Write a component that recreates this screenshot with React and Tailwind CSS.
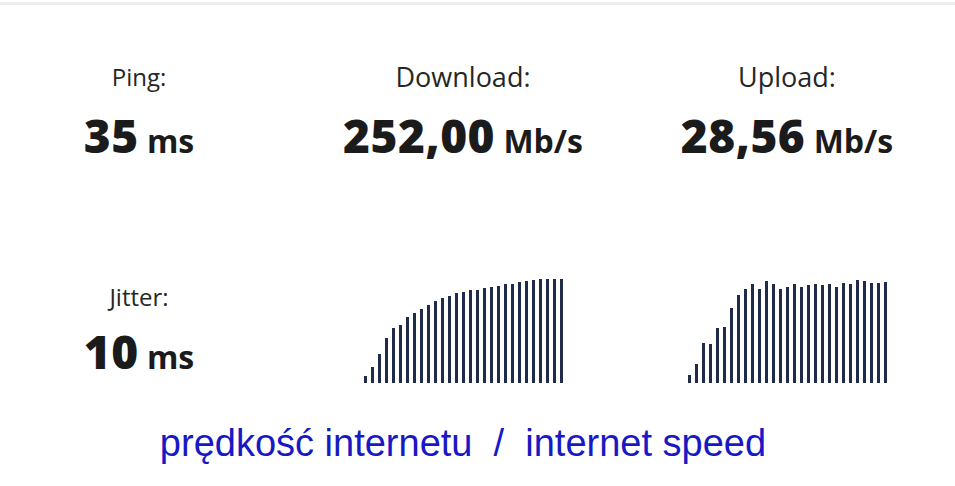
import React from "react";

const downloadBars = [
  7, 16, 29, 45, 55, 58, 66, 70, 74, 78, 82, 85, 87, 90, 91, 93, 93, 95, 96,
  97, 99, 99, 101, 102, 103, 104, 104, 104, 104,
];

const uploadBars = [
  8, 19, 40, 39, 55, 56, 75, 88, 94, 99, 94, 102, 99, 94, 96, 99, 96, 98, 99,
  98, 99, 96, 100, 99, 103, 102, 100, 100, 101,
];

function Label({ text, big }) {
  return (
    <div
      className={`leading-[32px] text-[#262626] ${
        big ? "text-[27px]" : "text-[24px]"
      }`}
    >
      {text}
    </div>
  );
}

function Value({ num, unit, className = "mt-[18px]" }) {
  return (
    <div
      className={`${className} h-[48px] leading-[48px] font-extrabold text-[46px] tracking-[0.5px] text-[#1b1b1b] whitespace-nowrap`}
    >
      {num}
      <span className="text-[32px] tracking-normal font-bold"> {unit}</span>
    </div>
  );
}

function Bars({ data }) {
  return (
    <div className="flex items-end justify-center gap-[4px] h-[104px]">
      {data.map((h, i) => (
        <div
          key={i}
          className="w-[3px] bg-[#1f2b48]"
          style={{ height: `${h}px` }}
        />
      ))}
    </div>
  );
}

export default function App() {
  return (
    <div className="w-[955px] h-[486px] bg-white overflow-hidden font-['Open_Sans',sans-serif]">
      <div className="mt-[2px] h-[3px] bg-[#ededed]" />

      {/* top row: ping / download / upload */}
      <div className="grid grid-cols-[278px_370px_278px] w-[926px] mt-[56px]">
        <div className="flex flex-col items-center">
          <Label text="Ping:" />
          <Value num="35" unit="ms" />
        </div>
        <div className="flex flex-col items-center">
          <Label text="Download:" big />
          <Value num="252,00" unit="Mb/s" />
        </div>
        <div className="flex flex-col items-center">
          <Label text="Upload:" big />
          <Value num="28,56" unit="Mb/s" />
        </div>
      </div>

      {/* second row: jitter + charts */}
      <div className="grid grid-cols-[278px_370px_278px] w-[926px] mt-[120px] h-[104px]">
        <div className="flex flex-col items-center pt-[2px]">
          <Label text="Jitter:" />
          <Value num="10" unit="ms" className="mt-[14px]" />
        </div>
        <Bars data={downloadBars} />
        <Bars data={uploadBars} />
      </div>

      <div className="w-[926px] mt-[39px] text-center leading-[42px] text-[38px] text-[#1818c4] font-['Liberation_Sans',Arial,sans-serif] whitespace-nowrap">
        prędkość internetu&nbsp;&nbsp;/&nbsp;&nbsp;internet speed
      </div>
    </div>
  );
}
